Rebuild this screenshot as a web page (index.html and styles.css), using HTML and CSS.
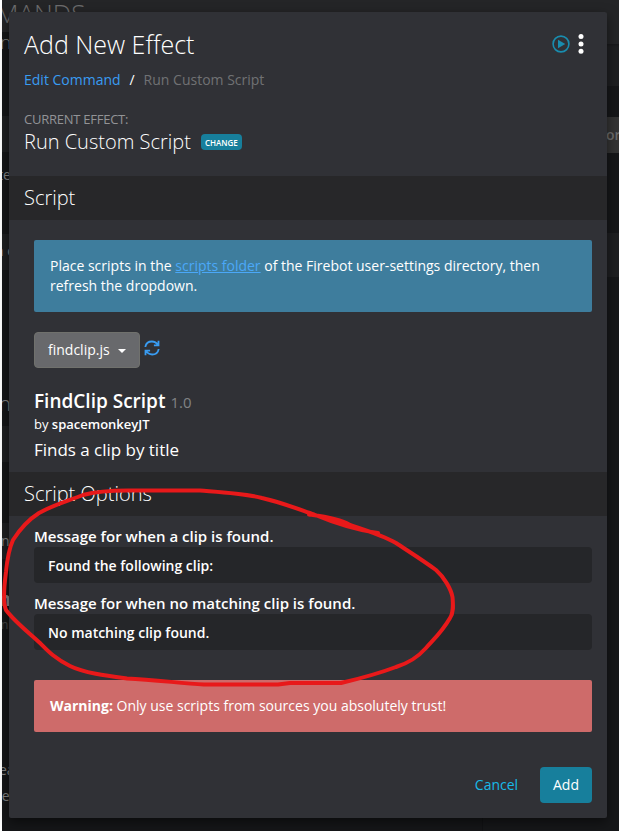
FILE: index.html
```html
<!DOCTYPE html>
<html lang="en">
<head>
<meta charset="utf-8">
<title>Add New Effect</title>
<link rel="stylesheet" href="styles.css">
</head>
<body>
<div class="app">
  <div class="backdrop" aria-hidden="true">
    <div class="topbar"></div>
    <div class="side-panel"></div>
    <div class="row row-a"></div><div class="row row-b"></div><div class="row row-c"></div><div class="row row-d"></div>
    <div class="block block-a"></div><div class="block block-b">or</div><div class="block block-c"></div>
    <span class="behind heading">MANDS</span>
    <span class="behind b1">n</span>
    <span class="behind b2">te</span>
    <span class="behind b3">n c</span>
    <span class="behind b4">n</span>
    <span class="behind b5">n</span>
    <span class="behind b6">n</span>
    <span class="behind b7">n</span>
    <span class="behind b8">ea</span>
    <span class="behind b9">re</span>
  </div>
  <main class="modal">
    <header class="header">
      <div class="title-row">
        <h1 class="title">Add New Effect</h1>
        <div class="actions">
          <svg class="play" viewBox="0 0 18 18"><circle cx="9" cy="9" r="7.9"/><path d="M6 4.8v8.4L13.3 9z"/></svg>
          <svg class="dots" viewBox="0 0 6 20"><circle cx="3" cy="2.6" r="2.5"/><circle cx="3" cy="9.9" r="2.5"/><circle cx="3" cy="17.2" r="2.5"/></svg>
        </div>
      </div>
      <nav class="crumbs"><a class="crumb-link">Edit Command</a><span class="sep">/</span><span class="crumb-now">Run Custom Script</span></nav>
      <div class="label">CURRENT EFFECT:</div>
      <div class="effect"><span class="effect-name">Run Custom Script</span><span class="badge">CHANGE</span></div>
    </header>
    <h2 class="section"><span class="w-script">Script</span></h2>
    <section class="script">
      <div class="info">Place scripts in the <a class="folder">scripts folder</a> of the Firebot user-settings directory, then<br>refresh the dropdown.</div>
      <div class="picker">
        <button class="dropdown">findclip.js<i class="caret"></i></button>
        <svg class="refresh" viewBox="0 0 16 16"><path d="M1.400 7.100V6.700C2 3.600 4.600 1.500 7.900 1.500c2.500 0 4.500 1.100 6.300 3.700M14.500 .8v4.600H9.900M14.600 8.900v.4c-.6 3.100-3.200 5.200-6.500 5.200-2.500 0-4.500-1.100-6.300-3.700M1.500 15.200v-4.600h4.600"/></svg>
      </div>
      <div class="name-row"><span class="name">FindClip Script</span><span class="version">1.0</span></div>
      <div class="author">by <b>spacemonkeyJT</b></div>
      <div class="description">Finds a clip by title</div>
    </section>
    <h2 class="section"><span class="w-options">Script Options</span></h2>
    <section class="options">
      <label class="field-label first">Message for when a clip is found.</label>
      <div class="input">Found the following clip:</div>
      <label class="field-label">Message for when no matching clip is found.</label>
      <div class="input">No matching clip found.</div>
      <div class="warning"><b>Warning:</b> Only use scripts from sources you absolutely trust!</div>
    </section>
    <footer class="footer"><button class="cancel">Cancel</button><button class="add">Add</button></footer>
  </main>
  <svg class="marker" viewBox="0 0 619 831"><path d="M309 514.500C320 516 338 518 350 525C365 530 382 535 396 543C408 551 424 561 436 570C444 577 451 589 452.500 597C453 604 454 612 450 618C442 632 434 639 426 648C417 658 409 663 396 667C380 673 358 679 341 683H290L278 684.500H204C180 683 155 680 127 678.500C108 676 84 673 70 666C54 658 47 650 40 643C28 632 14 621 6 610C2 600 5 580 6 572C7 561 9 549 13 540C20 529 28 520 39 513C55 504 68 501 83 495C98 491 110 490.500 128 490.500H200C220 492 244 493 262 498C280 502 298 509 314 514.500C332 522 354 530 378 533"/></svg>
</div>
</body>
</html>
```

FILE: styles.css
```css
* { box-sizing: border-box; }
body { margin: 0; background: #fff; font-family: "Open Sans", sans-serif; font-size: 14px; line-height: 20px; color: #fff; }
button { font: inherit; color: inherit; border: 0; margin: 0; }
.app { position: relative; width: 619px; height: 831px; padding: 12px 12px 13px 9px; overflow: hidden; }
.backdrop { position: absolute; inset: 0 0 0 2px; background: #151618; overflow: hidden; }
.topbar { position: absolute; inset: 0 0 auto 0; height: 32px; background: #242527; }
.side-panel { position: absolute; left: 480px; right: 0; top: 12px; bottom: 0; background: #161719; border-left: 1px solid #111214; }
.row { position: absolute; left: 0; width: 12px; height: 36px; background: #1e1f21; }
.row-a { top: 116px; }
.row-b { top: 234px; }
.row-c { top: 426px; }
.row-d { top: 523px; }
.block { position: absolute; left: 604px; right: 0; }
.block-a { top: 0; height: 86px; background: linear-gradient(#242527 44px, #18191b 44px, #1e1f21 47px); }
.block-b { top: 117px; height: 36px; background: #343434; color: #6c6c6c; line-height: 36px; font-weight: 600; }
.block-c { top: 233px; height: 44px; background: #1e1f21; }
.behind { position: absolute; left: 0; color: #858585; white-space: nowrap; }
.heading { left: -6px; top: -3px; font-size: 26px; line-height: 32px; color: #6c6c6d; font-weight: 300; }
.b1 { left: -2px; top: 30px; font-size: 19px; line-height: 24px; font-weight: 300; }
.b2 { left: -4px; top: 165px; }
.b3 { left: -7px; top: 241px; }
.b4 { left: -3px; top: 392px; font-size: 20px; line-height: 24px; font-weight: 300; }
.b5 { left: -1px; top: 531px; }
.b6 { left: -4px; top: 587px; font-size: 20px; line-height: 24px; font-weight: 700; }
.b7 { left: -1px; top: 615px; font-size: 12px; color: #444; }
.b8 { left: -3px; top: 760px; }
.b9 { left: -6px; top: 786px; }
.modal { position: relative; display: flex; flex-direction: column; width: 598px; height: 806px; background: #303136; border-radius: 2px; box-shadow: 0 4px 12px rgba(0,0,0,.5); }
.header { height: 164px; padding: 15px 23px 0 15px; }
.title-row { display: flex; justify-content: space-between; height: 36px; }
.title { margin: 0; font-size: 25px; line-height: 35px; font-weight: 300; }
.actions { display: flex; gap: 8px; padding-top: 7px; align-items: flex-start; }
.play { width: 18px; height: 18px; margin-top: 1px; fill: #198daf; }
.play circle { fill: none; stroke: #198daf; stroke-width: 1.6; }
.dots { width: 6px; height: 20px; fill: #fff; }
.crumbs { display: flex; margin-top: 7px; }
.crumb-link { color: #399cf2; }
.sep { width: 23px; text-align: center; }
.crumb-now { color: #707174; }
.label { margin-top: 20px; font-size: 13px; line-height: 18px; letter-spacing: -.25px; font-weight: 500; color: #929396; }
.effect { display: flex; align-items: center; height: 28px; gap: 10px; }
.effect-name { font-size: 20px; font-weight: 300; }
.badge { width: 41px; height: 16px; border-radius: 4px; background: #177f9c; font-size: 8px; font-weight: 600; line-height: 17px; text-align: center; }
.section { flex: none; height: 44px; margin: 0; padding-left: 15px; background: #272729; font-size: 20px; line-height: 43px; font-weight: 300; }
.script { height: 252px; padding: 20px 15px 0 25px; }
.info { height: 72px; padding: 16px; border-radius: 2px; background: #3e7d9d; }
.folder { color: #4ba8f8; text-decoration: underline; }
.picker { display: flex; gap: 4px; margin-top: 20px; height: 36px; }
.dropdown { display: flex; align-items: center; gap: 8px; width: 106px; height: 36px; padding: 0 14px 0 13px; border: 1px solid #70716d; border-radius: 4px; background: #68696c; }
.caret { border: 4px solid transparent; border-top-color: #fff; border-bottom: 0; margin-top: 2px; }
.refresh { width: 16px; height: 16px; margin-top: 8px; fill: none; stroke: #399cf2; stroke-width: 1.8; }
.name-row { display: flex; align-items: baseline; gap: 5px; margin-top: 19px; height: 28px; line-height: 29px; }
.name { font-size: 19px; font-weight: 600; }
.version { font-size: 15px; color: #818285; }
.author { font-size: 13px; line-height: 18px; }
.author b { font-weight: 600; }
.description { margin-top: 4px; font-size: 17px; line-height: 26px; letter-spacing: -.02px; }
.options { height: 216px; padding: 9px 15px 0 25px; }
.field-label { display: block; height: 22px; margin-top: 9px; font-size: 15px; line-height: 23px; font-weight: 600; }
.field-label.first { margin-top: 0; }
.input { height: 36px; padding-left: 14px; border-radius: 4px; background: #252629; line-height: 37px; font-weight: 600; }
.warning { height: 52px; margin-top: 30px; padding: 16px; border-radius: 2px; background: #ce6b6a; }
.footer { display: flex; justify-content: flex-end; gap: 8px; margin-top: 35px; padding-right: 15px; }
.cancel { width: 71px; height: 36px; background: none; color: #18bae8; }
.add { width: 52px; height: 36px; background: #177f9c; border-radius: 4px; font-weight: 500; }
.marker { position: absolute; inset: 0; width: 619px; height: 831px; fill: none; stroke: #e8191a; stroke-width: 4; stroke-linecap: round; stroke-linejoin: round; pointer-events: none; }
```
